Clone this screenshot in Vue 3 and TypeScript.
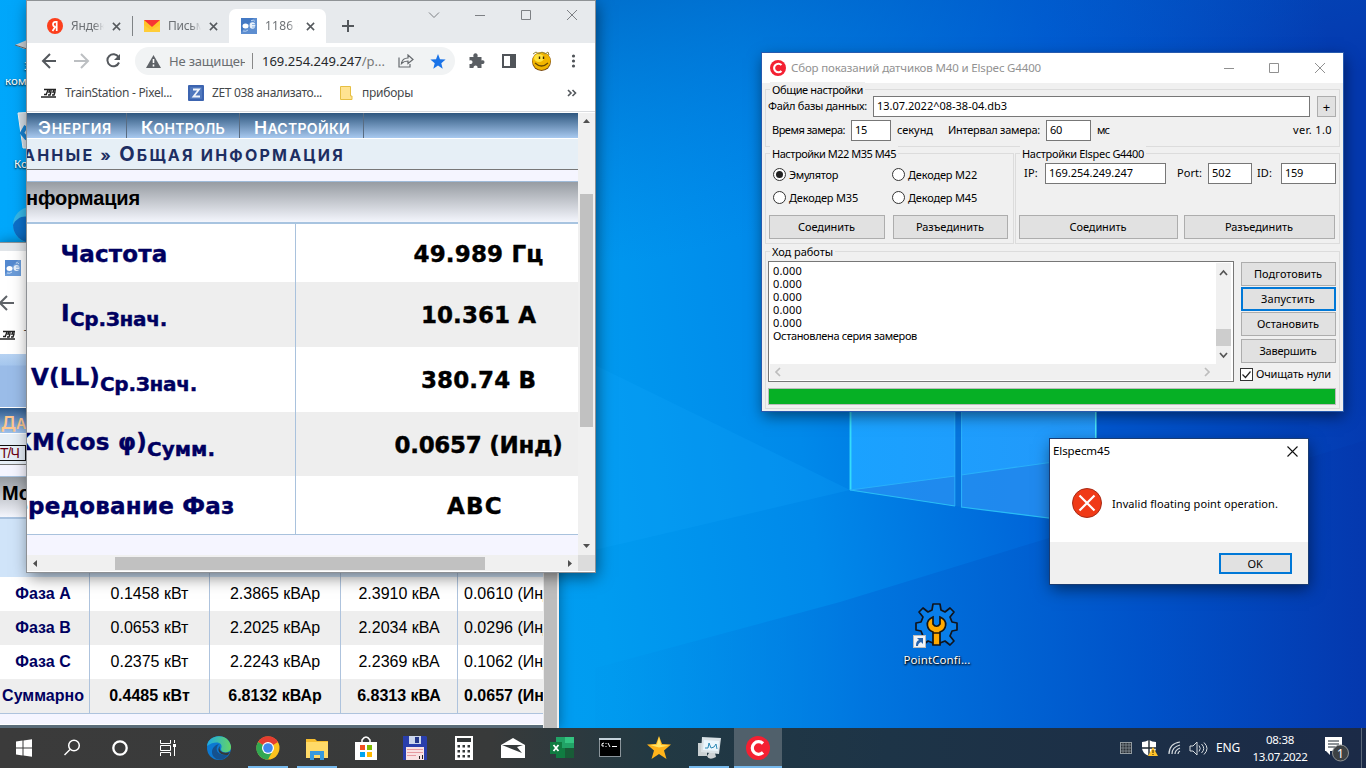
<script setup lang="ts">
import type { Directive } from 'vue'

// Spreads a label over a given width by adjusting its letter spacing.
const vFit: Directive<HTMLElement, number> = {
  mounted(el, binding) {
    const apply = () => {
      el.style.letterSpacing = '0px'
      const natural = el.getBoundingClientRect().width
      const count = (el.textContent ?? '').trim().length
      if (count > 0) el.style.letterSpacing = `${(binding.value - natural) / count}px`
    }
    apply()
    document.fonts.ready.then(apply)
  },
}

interface Reading { id: string; label: string; sub: string; value: string; lw: number; sw: number; vw: number; h: number }
const readings: Reading[] = [
  { id: 'f', label: 'Частота', sub: '', value: '49.989 Гц', lw: 107, sw: 0, vw: 130, h: 58 },
  { id: 'i', label: 'I', sub: 'Ср.Знач.', value: '10.361 A', lw: 9, sw: 97, vw: 115, h: 65 },
  { id: 'v', label: 'V(LL)', sub: 'Ср.Знач.', value: '380.74 В', lw: 69, sw: 97, vw: 115, h: 65 },
  { id: 'k', label: 'КМ(cos φ)', sub: 'Сумм.', value: '0.0657 (Инд)', lw: 134, sw: 68, vw: 168, h: 64 },
  { id: 'p', label: 'Чередование Фаз', sub: '', value: 'ABC', lw: 241, sw: 0, vw: 56, h: 58 },
]
const phases: string[][] = [
  ['Фаза A', '0.1458 кВт', '2.3865 кВАр', '2.3910 кВА', '0.0610 (Инд)'],
  ['Фаза B', '0.0653 кВт', '2.2025 кВАр', '2.2034 кВА', '0.0296 (Инд)'],
  ['Фаза C', '0.2375 кВт', '2.2243 кВАр', '2.2369 кВА', '0.1062 (Инд)'],
  ['Суммарно', '0.4485 кВт', '6.8132 кВАр', '6.8313 кВА', '0.0657 (Инд)'],
]
const log: string[] = ['0.000', '0.000', '0.000', '0.000', '0.000', 'Остановлена серия замеров']
const keys: number[] = [0, 1, 2, 3, 4, 5, 6, 7, 8]
</script>

<template>
  <div class="desktop">
    <svg class="wallpaper" viewBox="0 0 1366 768" preserveAspectRatio="none">
      <defs>
        <linearGradient id="bg" gradientUnits="userSpaceOnUse" x1="0" y1="500" x2="1366" y2="300">
          <stop offset="0" stop-color="#00a8fc" /><stop offset=".42" stop-color="#009cf0" />
          <stop offset=".58" stop-color="#0089ea" /><stop offset=".8" stop-color="#0058d2" /><stop offset="1" stop-color="#0438ae" />
        </linearGradient>
        <linearGradient id="topshade" gradientUnits="userSpaceOnUse" x1="590" y1="0" x2="660" y2="260">
          <stop offset="0" stop-color="#0058b8" stop-opacity=".6" /><stop offset="1" stop-color="#0070d8" stop-opacity="0" />
        </linearGradient>
        <linearGradient id="ray" gradientUnits="userSpaceOnUse" x1="595" y1="0" x2="1366" y2="0">
          <stop offset="0" stop-color="#0090e8" stop-opacity=".1" /><stop offset=".35" stop-color="#0072dd" stop-opacity=".8" />
          <stop offset=".72" stop-color="#0050c6" stop-opacity=".8" /><stop offset="1" stop-color="#0438ae" />
        </linearGradient>
        <linearGradient id="pane" x1="0" y1="0" x2="1" y2="0"><stop offset="0" stop-color="#1aa2ff" /><stop offset="1" stop-color="#2398fa" /></linearGradient>
      </defs>
      <rect width="1366" height="768" fill="url(#bg)" />
      <rect x="560" width="806" height="260" fill="url(#topshade)" />
      <path d="M595 668L840 602 1049 538 1366 440V768H595z" fill="url(#ray)" />
      <path d="M595 365L850 490 595 550z" fill="#16a9ff" opacity=".2" />
      <path d="M850 400H955V506L850 490zM961 400H1096V524L961 507z" fill="url(#pane)" />
      <path d="M850 490L955 476V506zM961 475L1096 456V524L961 507z" fill="#2080e6" opacity=".65" />
      <path d="M850.5 400V490L955 506M961 507L1096 524" fill="none" stroke="#29bdf5" stroke-width="1.2" />
      <path d="M850.5 400V490" stroke="#35dcfa" stroke-width="1.8" /><path d="M1095.8 400V440" stroke="#4deafa" stroke-width="1.5" />
      <path d="M850 490L955 476M961 475L1096 456M955 400V506M961.5 400V507" fill="none" stroke="#29b0fa" stroke-width="1.2" />
      <path d="M955.5 400H961V507L955.5 506z" fill="#0774dc" />
    </svg>

    <div class="desk-item computer">
      <svg width="27" height="16" viewBox="0 0 27 16"><path d="M15 8L27 3V12L24 12z" fill="#c7cdd3" /><path d="M15 8L27 12" stroke="#666" /></svg>
      <span class="r">Эт</span><span>ком</span>
    </div>
    <div class="desk-item bin">
      <svg width="34" height="38" viewBox="0 0 34 38"><path d="M18 2L34 1V37H23z" fill="#d5dee6" stroke="#f1f4f6" /><path d="M26 15l-4 7 5 6" fill="none" stroke="#1682d2" stroke-width="4" /></svg>
      <span>Корзина</span>
    </div>
    <svg class="desk-edge" width="36" height="36" viewBox="0 0 36 36"><circle cx="18" cy="18" r="18" fill="#36b7e7" /><path d="M0 18C3 10 14 6 20 13V36C8 36 0 28 0 18z" fill="#0c6fc9" /></svg>

    <div class="pointconf">
      <svg width="46" height="48" viewBox="0 0 46 48">
        <path d="M20 2h7l1 6 4 2 5-4 4 4-4 5 2 5 5 1v7l-5 1-2 5 4 5-4 4-5-4-5 2v1h-7v-1l-5-2-5 4-4-4 4-5-2-5-5-1v-7l5-1 2-5-4-5 4-4 5 4 4-2z" fill="#087eea" stroke="#10141c" stroke-width="1.7" stroke-linejoin="round" />
        <path d="M20 15c-9 4-6 13 0 15v13h7V30c6-2 9-11 0-15v7c-2 3-5 3-7 0z" fill="#ffa900" stroke="#151515" stroke-width="1.7" /><path d="M20 31h7" stroke="#151515" stroke-width="1.5" />
        <rect x="0.5" y="33.500" width="12" height="12" fill="#f2f4f7" stroke="#bbb" /><path d="M3 44c0-4 1-5 3-6l-2-2h6v6l-2-2c-2 1-3 2-3 4z" fill="#2864ac" />
      </svg>
      <span v-fit="67">PointConfi...</span>
    </div>

    <section class="back-window">
      <div class="b-tabs"></div>
      <div class="b-fav"><svg class="fav" viewBox="0 0 16 16"><rect width="16" height="16" fill="#5489cf" /><path d="M0 14L13 0H16V16H0z" fill="#7ba9df" opacity=".6" /><ellipse cx="4.500" cy="8.500" rx="3" ry="2.500" fill="#fff" /><ellipse cx="11.500" cy="8" rx="3" ry="3" fill="#e8f1fb" /><path d="M11 7h3M11 9.500h3" stroke="#8db3e2" /><path d="M2 13q3 1 5-1M11 3q2-1 3 1" fill="none" stroke="#c5daf3" /></svg></div>
      <div class="b-tool"><svg width="16" height="16" viewBox="0 0 16 16"><path d="M14 8H1M7 1L0 8l7 7" fill="none" stroke="#5f6368" stroke-width="2" /></svg></div>
      <div class="b-book"><svg class="train" width="16" height="10" viewBox="0 0 16 10"><path d="M0 9H15M3 6.500H6M3 1.500H15M7 2L5 7M11 2H9L8 4h2L9 7H7M15 2H13L12 4h2L13 7H11" fill="none" stroke="#222" stroke-width="1.400" /></svg><span>TrainStation</span></div>
      <div class="banner"></div>
      <div class="b-nav"><b class="sc">Данные</b></div>
      <div class="b-crumb"><span>Т/Ч</span></div>
      <div class="gap"></div>
      <div class="b-head">Мощность</div>
      <div class="b-cols"><i v-for="n in 5" :key="n"></i></div>
      <div v-for="(row, r) in phases" :key="r" class="b-row" :class="{ odd: r % 2 === 1, total: r === 3 }">
        <div v-for="(c, i) in row" :key="i" class="cell"><span>{{ c }}</span></div>
      </div>
      <div class="b-end"></div>
      <div class="b-scroll"></div>
    </section>

    <section class="chrome">
      <header class="tabs">
        <div class="tab t1">
          <svg class="fav" viewBox="0 0 16 16"><circle cx="8" cy="8" r="8" fill="#fc3f1d" /><path d="M9.700 13V3.800H8.500Q6 4 6 6.300 6 8.600 8.600 8.800M8.500 8.500L5.500 13" stroke="#fff" stroke-width="1.700" fill="none" /></svg>
          <span class="tt"><b v-fit="40">Яндекс</b></span>
          <svg class="x" viewBox="0 0 10 10"><path d="M1 1l8 8M9 1L1 9" /></svg>
        </div>
        <div class="tab t2">
          <svg class="fav" viewBox="0 0 16 16"><rect y="2" width="16" height="12" fill="#ffcd38" /><path d="M8 9L0 2v5l7 5 9-5V2z" fill="#ffbe1c" opacity=".55" /><path d="M0 2H16L8 9z" fill="#f73434" /></svg>
          <span class="tt"><b v-fit="43">Письма</b></span>
          <svg class="x" viewBox="0 0 10 10"><path d="M1 1l8 8M9 1L1 9" /></svg>
        </div>
        <div class="tab t3">
          <svg class="fav" viewBox="0 0 16 16"><rect width="16" height="16" fill="#4379c4" /><path d="M0 14L13 0H16V16H0z" fill="#709cd8" opacity=".6" /><ellipse cx="4.500" cy="8" rx="3" ry="2.500" fill="#fff" /><ellipse cx="11.500" cy="7.500" rx="2.800" ry="3.200" fill="#e8f1fb" /><path d="M11 6.500h3M11 9h3" stroke="#8db3e2" /><path d="M2 13q3 1 5-1M10 2.500q3-1 4 1" fill="none" stroke="#b5cff0" /></svg>
          <span class="tt"><b v-fit="39">1186 ≠</b></span>
          <svg class="x" viewBox="0 0 10 10"><path d="M1 1l8 8M9 1L1 9" /></svg>
        </div>
        <svg class="plus" viewBox="0 0 12 12"><path d="M6 0V12M0 6H12" stroke="#54585c" stroke-width="2" /></svg>
        <svg class="wincontrols" viewBox="0 0 150 12"><path d="M1 3.500l5 5 5-5M47 6.500h10M93.500 1.500h9v9h-9zM139 1l10 10M149 1l-10 10" fill="none" stroke="#7d8084" /></svg>
      </header>
      <div class="toolbar">
        <svg class="navicons" viewBox="0 0 84 16"><g fill="none" stroke-width="2"><path d="M15 8H2M9 1L2 8l7 7" stroke="#54585d" /><path d="M33 8h13M40 1l7 7-7 7" stroke="#bcbfc2" /><path d="M77.500 4A6 6 0 1 0 78 9.500" stroke="#54585d" /></g><path d="M79 1v6h-6z" fill="#54585d" /></svg>
        <div class="omni">
          <svg width="15" height="13" viewBox="0 0 15 13"><path d="M7.500 0L15 13H0z" fill="#5f6368" /><path d="M7.500 4v4M7.500 9.500v2" stroke="#fff" stroke-width="1.600" /></svg>
          <span class="unsafe"><b v-fit="86">Не защищено</b></span><i></i>
          <span class="url" v-fit="123">169.254.249.247<em>/p...</em></span>
          <svg class="share" width="16" height="14" viewBox="0 0 16 14"><path d="M1 3.500V13h11v-3M3.500 9.500C4 6 6 4 10 4V1l5 4.500-5 4V7C7 7 5 8 3.500 9.500z" fill="none" stroke="#666a6e" stroke-width="1.200" /></svg>
          <svg width="16" height="15" viewBox="0 0 16 15"><path d="M8 0l2 5.200 5.600.300-4.300 3.700 1.400 5.500L8 11.600l-4.700 3.100 1.400-5.500L.4 5.500 6 5.200z" fill="#1a73e8" /></svg>
        </div>
        <svg class="tools" viewBox="0 0 108 22">
          <path d="M0.500 7h4c-1.500-5 5.500-5 4 0h4v3.500c4-1.500 4 4.500 0 3.500v4H8.500c1-3.500-4.500-3.500-4 0h-4v-4c4 1 4-5 0-3.500z" fill="#5a5e63" />
          <rect x="34" y="5" width="12" height="12" fill="none" stroke="#505459" stroke-width="2" /><rect x="41" y="5" width="5" height="12" fill="#505459" />
          <circle cx="72.500" cy="11.500" r="9.500" fill="#7c4b0f" /><circle cx="72.500" cy="11" r="9" fill="#f1b500" /><ellipse cx="70" cy="8" rx="5" ry="4" fill="#ffe23d" /><path d="M64 4l3-2 3 2 3-2 3 2 3-2 1 3" fill="none" stroke="#8f843a" /><path d="M70.500 6.500v2.500M74.500 6.500v2.500" stroke="#372400" stroke-width="1.400" /><path d="M66 13q6.500 6 13 0" fill="none" stroke="#6b4a00" stroke-width="1.200" />
          <g fill="#505459"><circle cx="104.500" cy="6" r="1.600" /><circle cx="104.500" cy="11" r="1.600" /><circle cx="104.500" cy="16" r="1.600" /></g>
        </svg>
      </div>
      <div class="bookmarks">
        <svg class="train" width="16" height="10" viewBox="0 0 16 10"><path d="M0 9H15M3 6.500H6M3 1.500H15M7 2L5 7M11 2H9L8 4h2L9 7H7M15 2H13L12 4h2L13 7H11" fill="none" stroke="#222" stroke-width="1.400" /></svg>
        <span v-fit="107">TrainStation - Pixel...</span>
        <svg class="zet" width="16" height="16" viewBox="0 0 16 16"><rect width="16" height="16" rx="1" fill="#3c64b0" /><rect x="2" y="2" width="12" height="12" rx="1" fill="#5078bd" /><path d="M5 4.500h6L5.500 11.500H12" fill="none" stroke="#f1f5fb" stroke-width="1.800" /></svg>
        <span v-fit="110">ZET 038 анализато...</span>
        <svg class="folder" width="13" height="14" viewBox="0 0 13 14"><path d="M.5.5h10V10h1.500v3.500H.5z" fill="#ffe391" stroke="#e6bf42" /></svg>
        <span v-fit="51">приборы</span>
        <svg class="more" width="10" height="8" viewBox="0 0 10 8"><path d="M1 1l3 3-3 3M5.500 1l3 3-3 3" fill="none" stroke="#54585d" stroke-width="1.600" /></svg>
      </div>
      <div class="view">
        <div class="page">
          <nav><span class="n1"><b class="sc" v-fit="74">Энергия</b></span><span class="n2"><b class="sc" v-fit="84">Контроль</b></span><span class="n3"><b class="sc" v-fit="96">Настройки</b></span></nav>
          <div class="crumb"><span class="trail" v-fit="322">анные » <b class="sc">Общая</b> информация</span></div>
          <div class="gap"></div>
          <div class="head"><span v-fit="114">нформация</span></div>
          <div v-for="r in readings" :key="r.id" class="reading" :class="r.id" :style="{ height: r.h + 'px' }">
            <div class="lab" :class="{ withsub: r.sub }"><span v-fit="r.lw">{{ r.label }}</span><small v-if="r.sub" v-fit="r.sw">{{ r.sub }}</small></div>
            <div class="val"><span v-fit="r.vw">{{ r.value }}</span></div>
          </div>
          <div class="foot"></div>
        </div>
        <div class="vscroll"><svg viewBox="0 0 17 442"><rect x="2" y="81" width="13" height="233" fill="#c1c1c1" /><path d="M5 10l3.500-4 3.500 4zM5 431l3.500 4 3.500-4z" fill="#505050" /></svg></div>
        <div class="hscroll"><svg viewBox="0 0 551 16"><rect x="88" y="2" width="370" height="13" fill="#c1c1c1" /><path d="M10 5v7L6 8.500zM541 5v7l4-3.500z" fill="#505050" /></svg></div>
        <div class="corner"></div>
      </div>
    </section>

    <section class="form">
      <header>
        <svg width="16" height="16" viewBox="0 0 16 16"><circle cx="8" cy="8" r="8" fill="#f42032" /><path d="M11.500 5A4.300 4.300 0 1 0 11.500 11" fill="none" stroke="#fff" stroke-width="2.100" /></svg>
        <span v-fit="250">Сбор показаний датчиков М40 и Elspec G4400</span>
        <svg class="fc" width="102" height="12" viewBox="0 0 102 12"><path d="M0 6.500h10M45.500 1.500h9v9h-9zM91 1l10 10M101 1L91 11" fill="none" stroke="#909090" /></svg>
      </header>
      <div class="group g1">
        <h4><span v-fit="91">Общие настройки</span></h4>
        <div class="line l1"><label v-fit="99">Файл базы данных:</label><div class="input"><span v-fit="130">13.07.2022^08-38-04.db3</span></div><button>+</button></div>
        <div class="line l2"><label v-fit="73">Время замера:</label><div class="input w40"><span v-fit="12">15</span></div><label class="sec" v-fit="36">секунд</label><label class="int" v-fit="92">Интервал замера:</label><div class="input w45"><span v-fit="12">60</span></div><label class="ms" v-fit="12">мс</label><label class="ver" v-fit="39">ver. 1.0</label></div>
      </div>
      <div class="pair">
        <div class="group g2">
          <h4><span v-fit="124">Настройки М22 М35 М45</span></h4>
          <div class="radios">
            <div class="radio"><i class="on"></i><span v-fit="49">Эмулятор</span></div><div class="radio"><i></i><span v-fit="69">Декодер М22</span></div>
            <div class="radio"><i></i><span v-fit="69">Декодер М35</span></div><div class="radio"><i></i><span v-fit="69">Декодер М45</span></div>
          </div>
          <div class="btns"><button class="b116"><span v-fit="57">Соединить</span></button><button class="b115"><span v-fit="68">Разъединить</span></button></div>
        </div>
        <div class="group g3">
          <h4><span v-fit="122">Настройки Elspec G4400</span></h4>
          <div class="line net"><label class="ip" v-fit="14">IP:</label><div class="input w121"><span v-fit="84">169.254.249.247</span></div><label class="port" v-fit="25">Port:</label><div class="input w44"><span v-fit="19">502</span></div><label class="id" v-fit="15">ID:</label><div class="input w55"><span v-fit="18">159</span></div></div>
          <div class="btns"><button class="b159"><span v-fit="57">Соединить</span></button><button class="b151"><span v-fit="68">Разъединить</span></button></div>
        </div>
      </div>
      <div class="group g4">
        <h4><span v-fit="61">Ход работы</span></h4>
        <div class="work">
          <div class="memo">
            <div class="lines"><p v-for="(t, i) in log" :key="i"><span v-fit="i === 5 ? 144 : 29">{{ t }}</span></p></div>
            <svg class="mv" viewBox="0 0 15 101"><rect width="15" height="101" fill="#f0f0f0" /><rect y="66" width="15" height="17" fill="#cdcdcd" /><path d="M4 12l3.500-4 3.500 4M4 90l3.500 4 3.500-4" fill="none" stroke="#555" stroke-width="1.700" /></svg>
            <svg class="mh" viewBox="0 0 461 16"><rect width="461" height="16" fill="#f0f0f0" /><path d="M10 4L6 8l4 4M435 4l4 4-4 4" fill="none" stroke="#bdbdbd" stroke-width="1.700" /></svg>
          </div>
          <div class="side">
            <button><span v-fit="68">Подготовить</span></button><button class="focus"><span v-fit="54">Запустить</span></button><button><span v-fit="62">Остановить</span></button><button class="last"><span v-fit="57">Завершить</span></button>
            <div class="check"><svg width="13" height="13" viewBox="0 0 13 13"><rect x=".5" y=".5" width="12" height="12" fill="#fff" stroke="#333" /><path d="M2.500 6.500l3 3 5-6" fill="none" stroke="#222" stroke-width="1.200" /></svg><span v-fit="75">Очищать нули</span></div>
          </div>
        </div>
        <div class="progress"></div>
      </div>
    </section>

    <section class="dialog">
      <header><span v-fit="57">Elspecm45</span><svg width="11" height="11" viewBox="0 0 11 11"><path d="M.5.5l10 10M10.500.5l-10 10" stroke="#111" stroke-width="1.100" /></svg></header>
      <div class="msg"><svg width="30" height="30" viewBox="0 0 30 30"><circle cx="15" cy="15" r="14.500" fill="#f03a17" stroke="#a72c17" /><path d="M7.500 7.500l15 15M22.500 7.500l-15 15" stroke="#fff" stroke-width="2.200" /></svg><span v-fit="166">Invalid floating point operation.</span></div>
      <footer><button><span v-fit="15">OK</span></button></footer>
    </section>

    <footer class="taskbar">
      <div class="task"><svg viewBox="0 0 40 40"><path d="M16 13.500l6.500-.9v6.900H16zM23.500 12.400l8.500-1.100v8.200h-8.500zM16 20.500h6.500v6.900L16 26.500zM23.500 20.500H32v8.200l-8.500-1.100z" fill="#fff" stroke="none" transform="translate(-4)" /></svg></div>
      <div class="task"><svg viewBox="0 0 40 40"><circle cx="22" cy="17.500" r="5.300" /><path d="M18 21.500L12.500 27" /></svg></div>
      <div class="task"><svg viewBox="0 0 40 40"><circle cx="20" cy="20" r="6.700" stroke-width="2.300" /></svg></div>
      <div class="task"><svg viewBox="0 0 40 40"><g stroke-width="1"><path d="M12.500 12v3.500h10V12M12.500 28v-3.500h10V28M12.500 17.500h10v5h-10zM26.500 12v3M26.500 19v9" /></g><rect x="25" y="16" width="3" height="3" fill="#fff" stroke="none" /></svg></div>
      <div class="task wide edge"><svg viewBox="0 0 40 40"><defs><linearGradient id="eg"><stop stop-color="#1ca9e5" /><stop offset="1" stop-color="#64d466" /></linearGradient></defs><circle cx="20" cy="20" r="12" fill="#0c79d2" stroke="none" /><path d="M8 18C9 6 29 4 32 18c1 8-10 8-10 3 3-7-6-9-14-3z" fill="url(#eg)" stroke="none" /><path d="M20 16c-5 5-2 12 9 11-5 8-16 5-16-3 0-4 3-7 7-8z" fill="#15518e" stroke="none" /><path d="M21 18c-2 5 3 8 10 6l-2 3c-8 1-12-5-8-9z" fill="#353839" stroke="none" /></svg></div>
      <div class="task wide run chr"><svg viewBox="0 0 40 40"><g stroke="none"><circle cx="20" cy="20" r="11.500" fill="#fbc21d" /><path d="M20 20L10 14A11.500 11.500 0 0 1 30 14z" fill="#e53d30" /><path d="M20 20L10 14A11.500 11.500 0 0 0 20 31.500l5-9z" fill="#31a852" /><circle cx="20" cy="20" r="6" fill="#fff" /><circle cx="20" cy="20" r="4.800" fill="#4087ed" /></g></svg></div>
      <div class="task wide run"><svg viewBox="0 0 40 40"><g stroke="none"><path d="M9 11h9l2 2h11v17H9z" fill="#f6bd2e" /><rect x="9" y="14" width="22" height="16" fill="#ffda68" /><path d="M13 23h14v9h-4v-5h-6v5h-4z" fill="#3699dd" /></g></svg></div>
      <div class="task wide"><svg viewBox="0 0 40 40"><path d="M16 14v-2q4-6 8 0v2" /><rect x="9" y="14" width="22" height="18" fill="#fff" stroke="none" /><g stroke="none"><path d="M14 17h5v5h-5z" fill="#f25022" /><path d="M21 17h5v5h-5z" fill="#7fba00" /><path d="M14 24h5v5h-5z" fill="#00a4ef" /><path d="M21 24h5v5h-5z" fill="#ffb900" /></g></svg></div>
      <div class="task wide"><svg viewBox="0 0 40 40"><g stroke="none"><path d="M8 8h23l1 1v23H8z" fill="#293eac" /><rect x="14" y="8" width="12" height="8" fill="#cbd6ec" /><rect x="20" y="9" width="4" height="6" fill="#243889" /><rect x="11" y="19" width="18" height="13" fill="#f8e2e3" /><path d="M12 21h16v1H12zM12 24h16v1H12zM12 27h9v1h-9z" fill="#e59aa0" /><path d="M24 28h1v3h-1zM27 27h1v4h-1z" fill="#222" /></g></svg></div>
      <div class="task wide"><svg viewBox="0 0 40 40"><rect x="11" y="8" width="18" height="24" fill="#fff" stroke="none" /><rect x="13" y="10" width="14" height="4" fill="#333738" stroke="none" /><g fill="#34393a" stroke="none"><rect v-for="k in keys" :key="k" :x="13.500 + (k % 3) * 5" :y="17 + Math.floor(k / 3) * 5" width="2.500" height="2.500" /></g></svg></div>
      <div class="task wide"><svg viewBox="0 0 40 40"><path d="M8 17l12-7 12 7v13H8z" fill="#fff" stroke="none" /><path d="M9 17l20 8-5-6 6-2z" fill="#353a3b" stroke="none" /></svg></div>
      <div class="task wide"><svg viewBox="0 0 40 40"><g stroke="none"><rect x="14" y="9" width="18" height="21" fill="#21a366" /><path d="M23 9h9v6h-9z" fill="#34c481" /><path d="M14 20h18v10H14z" fill="#107c41" /><path d="M23 20h9v10h-9z" fill="#185c37" /><rect x="8" y="14" width="12" height="12" fill="#107c41" /></g><path d="M11.500 17l5 6M16.500 17l-5 6" stroke-width="1.800" /></svg></div>
      <div class="task wide"><svg viewBox="0 0 40 40"><rect x="8.500" y="10.500" width="21" height="18" fill="#000" stroke="#8b959b" stroke-width="1" /><rect x="8" y="10" width="22" height="2" fill="#c5d2da" stroke="none" /><path d="M13 15q-3 0-2 3h2M15 15v1M15 18v1M17 15l2 4M21 18.500h5" stroke-width="1" /></svg></div>
      <div class="task wide"><svg viewBox="0 0 40 40"><path d="M19 8l3 8 9 .5-7 6 2.500 8.500L19 26l-7.500 5 2.500-8.500-7-6 9-.5z" fill="#ffb31a" stroke="none" /><path d="M19 9l2 8 8 .5-10 2-9-2.500 7-.5z" fill="#ffe568" stroke="none" /></svg></div>
      <div class="task wide run mon"><svg viewBox="0 0 40 40"><g stroke="none"><rect x="9" y="15" width="9" height="13" fill="#c9d0d2" /><path d="M13 9l19 1-2 16-18-2z" fill="#dae2e6" /><path d="M15 12l15 1-1 10-15-1z" fill="#eaf6fc" /><path d="M20 25h6l1 4q-7 4-9-1z" fill="#cdd2d4" /></g><path d="M16 20h3l1-5 2 5 3-1 2-3 1 5" stroke="#2b88b5" stroke-width="1" /></svg></div>
      <div class="task active"><svg viewBox="0 0 40 40"><circle cx="20" cy="20" r="12" fill="#f42032" stroke="none" /><path d="M25 15.500A6.300 6.300 0 1 0 25 24.500" stroke-width="3.200" /></svg></div>
      <div class="tray">
        <svg class="trayicons" viewBox="0 0 90 24"><rect x="1.500" y="6.500" width="11" height="11" fill="#292f35" stroke="#929ba1" /><path d="M4 6v12M7 6v12M10 6v12M1 9h12M1 12h12M1 15h12" stroke="#9098a0" stroke-width=".7" />
          <path d="M30 4q-4 2-7 2v6q0 5 7 8 7-3 7-8V6q-4 0-7-2z" fill="#fff" /><path d="M30 4v16M23 12h14" stroke="#1d2730" stroke-width="1.400" /><path d="M34 11l5 9H29z" fill="#ffc22a" /><path d="M34 14v3M34 18v1" stroke="#332300" />
          <g fill="none" stroke="#d7dce0" stroke-width="1.200"><path d="M50 18C50 11 54 7 61 6M53 18q0-7 8-9M56 18q0-4 5-6M59 18q0-2 2-3" /><path d="M71 10h3l4-4v13l-4-4h-3zM80 9.500q2.500 3 0 6M82.500 8q4.500 4.500 0 9M85 6.500q6 6 0 12" stroke-width="1" /></g></svg>
        <span class="eng" v-fit="24">ENG</span>
        <div class="clock"><span v-fit="28">08:38</span><span v-fit="55">13.07.2022</span></div>
        <svg class="notif" viewBox="0 0 26 26"><path d="M1 1h17v14H6v4l-4-4H1z" fill="#fff" /><path d="M4 5h11M4 8h11M4 11h7" stroke="#1a2730" /><circle cx="16.500" cy="17" r="8" fill="#3d4144" stroke="#8f9394" /><text x="16.500" y="21.500" text-anchor="middle" fill="#fff" font-size="12">1</text></svg>
        <i class="show"></i>
      </div>
    </footer>
  </div>
</template>

<style scoped>
* { box-sizing: border-box; }
.desktop { position: relative; width: 1366px; height: 768px; overflow: hidden; background: #0078d8; font: 12px/16px "Noto Sans", "Open Sans", sans-serif; color: #000; white-space: nowrap; }
svg { display: block; flex: none; }
b, em { font-weight: inherit; font-style: normal; }
span, b, label, small { display: inline-block; flex: none; }
.wallpaper { position: absolute; width: 1366px; height: 768px; }
.desk-item { position: absolute; left: 0; display: flex; flex-direction: column; color: #fff; font-size: 11.500px; line-height: 15px; text-shadow: 0 1px 2px #000; }
.computer { top: 37px; }
.computer span { padding-left: 5px; }
.computer span.r { padding-left: 24px; margin-top: 5px; }
.bin { top: 111px; }
.bin span { padding-left: 14px; margin-top: 7px; }
.desk-edge { position: absolute; left: 13px; top: 207px; }
.pointconf { position: absolute; left: 903px; top: 602px; width: 68px; display: flex; flex-direction: column; align-items: center; color: #fff; font-size: 11.500px; text-shadow: 1px 1px 2px #000, 0 1px 2px #000; }
.pointconf svg { margin-left: -2px; margin-bottom: 2px; align-self: center; }
.fav { width: 16px; height: 16px; }

/* Capitals at two sizes: the first letter tall, the rest reduced. */
.sc { text-transform: uppercase; font-size: .78em; }
.sc::first-letter { font-size: 1.25em; }

.back-window { position: absolute; left: 0; top: 242px; width: 559px; height: 486px; background: #fff; border-top: 1px solid #8c9195; box-shadow: 0 0 12px rgba(0,0,0,.4); overflow: hidden; font-family: "Liberation Sans", Arial, sans-serif; }
.b-tabs { height: 8px; background: #e1e5e9; }
.b-fav { padding: 9px 0 0 5px; height: 44px; }
.b-tool { height: 32px; }
.b-book { height: 27px; display: flex; gap: 8px; font: 12px/16px "Noto Sans", sans-serif; color: #444; }
.b-book svg { margin-top: 3px; }
.banner { height: 53px; background: linear-gradient(#b6d2f2 0, #a6c7ee 11px, #9abce8 12px); }
.b-nav { height: 27px; border: solid #fff; border-width: 1px 0; background: linear-gradient(#2e5a8c, #9fc2ec); color: #ffc78e; font: 600 18px/30px Inter, "Liberation Sans", sans-serif; padding-left: 1px; overflow: hidden; }
.b-crumb { height: 31px; background: #e7eff7; border-bottom: 1px solid #777; padding-top: 11px; }
.b-crumb span { width: 26px; height: 16px; border: 1.500px solid #111; border-left: 0; color: #6a0012; font-size: 14px; line-height: 14px; letter-spacing: -1px; }
.gap { height: 11px; background: #f5f5ff; }
.b-head { height: 43px; border-top: 1px solid #a8c2df; border-bottom: 2px solid #a8c2df; background: linear-gradient(#969ba1, #f4f6fd); font-weight: 700; font-size: 20px; line-height: 33px; padding-left: 2px; }
.b-cols, .b-row { display: grid; grid-template-columns: 90px 120px 131px 117px 140px; width: 543px; overflow: hidden; }
.b-cols { height: 58px; background: #d0e4f9; }
.b-cols i, .cell { border-right: 1px solid #aec3dd; }
.b-row { height: 34px; font-size: 16px; line-height: 33px; text-align: center; background: #fff; }
.b-row.odd { background: #eee; }
.cell:first-child { color: #000060; font-weight: 700; padding-right: 3px; }
.cell:last-child { text-align: left; padding-left: 6px; }
.b-row.total { font-weight: 700; border-bottom: 1px solid #aec3dd; height: 35px; }
.b-end { height: 15px; width: 543px; background: linear-gradient(#f5f5ff 0 10px, #fff 10px 11px, #5a6c79 11px); }
.b-scroll { position: absolute; right: 0; top: 9px; width: 16px; height: 480px; background: linear-gradient(90deg, #eee 1px, #bdbdbd 1px 14px, #eee 14px); }

.chrome { position: absolute; left: 27px; top: 0; width: 568px; height: 572px; background: #fff; outline: 1px solid #8d9094; box-shadow: 2px 5px 15px rgba(0,0,0,.5); color: #45484b; }
.tabs { height: 43px; border-top: 1px solid #8f9396; background: #e7eaed; display: flex; align-items: flex-start; padding-top: 8px; position: relative; }
.tab { height: 34px; display: flex; align-items: center; color: #6d7175; font-size: 12px; }
.t1 { width: 106px; padding-left: 20px; border-right: 1px solid #7f8386; height: 20px; margin-top: 7px; }
.t2 { width: 96px; padding-left: 11px; }
.t3 { width: 97px; padding-left: 12px; background: #fff; border-radius: 7px 7px 0 0; }
.tt { width: 33px; margin-left: 8px; overflow: hidden; -webkit-mask-image: linear-gradient(90deg, #000 70%, transparent); mask-image: linear-gradient(90deg, #000 70%, transparent); }
.x { width: 9px; height: 9px; margin-left: 8px; }
.x path { stroke: #55595d; stroke-width: 1.700; }
.plus { width: 12px; height: 12px; margin: 11px 0 0 16px; }
.wincontrols { width: 150px; height: 12px; position: absolute; left: 401px; top: 8px; }
.toolbar { height: 36px; display: flex; align-items: center; }
.navicons { width: 84px; height: 16px; margin-left: 14px; }
.omni { width: 320px; height: 28px; margin-left: 10px; background: #f1f3f4; border-radius: 14px; display: flex; align-items: center; padding-left: 11px; font-size: 13px; }
.unsafe { width: 76px; margin-left: 8px; overflow: hidden; color: #696d71; }
.omni i { width: 1px; height: 16px; background: #888; margin: 0 9px 0 7px; }
.url { color: #25282b; }
.url em { color: #777; }
.share { margin: 0 16px 0 13px; }
.tools { width: 108px; height: 22px; margin-left: 14px; }
.bookmarks { height: 33px; display: flex; align-items: center; padding: 0 0 4px 14px; border-bottom: 1px solid #dadcdf; font-size: 12px; }
.bookmarks .train { margin-right: 8px; }
.zet { margin: 0 8px 0 16px; }
.folder { margin: 0 9px 0 18px; }
.more { margin-left: auto; margin-right: 18px; }
.view { display: grid; grid-template-columns: 551px 17px; grid-template-rows: 442px 16px; padding-top: 1px; font-family: "Liberation Sans", Arial, sans-serif; }
.page { overflow: hidden; background: #f5f5ff; }
nav { height: 25px; background: linear-gradient(#2f577f, #a8c9ef); display: flex; color: #fff; font: 600 18px/30px Inter, "Liberation Sans", sans-serif; }
nav > span { border-right: 1px solid #596c82; padding-left: 11px; height: 25px; }
.n1 { width: 100px; } .n2 { width: 113px; padding-left: 14px; } .n3 { width: 124px; padding-left: 14px; }
.crumb { height: 32px; border-top: 1px solid #fff; border-bottom: 1px solid #777; background: #e6eff6; color: #1d2e62; font: 700 16px/32px Inter, "Liberation Sans", sans-serif; }
.crumb .trail { margin-left: -4px; text-transform: uppercase; }
.crumb .sc { font-size: 1em; line-height: 20px; }
.head { height: 43px; border-top: 1px solid #9fbbd9; border-bottom: 2px solid #a8c4e0; background: linear-gradient(#979ca2, #f4f6fd); color: #000; font-weight: 700; font-size: 20px; line-height: 33px; }
.page > .head span { margin-left: -1px; }
.reading { display: flex; background: #fff; font: 700 23px/28px "DejaVu Sans", sans-serif; -webkit-text-stroke: .4px currentColor; }
.reading:nth-child(even) { background: #eee; }
.lab { width: 363px; margin-left: -94px; flex: none; display: flex; align-items: center; justify-content: center; color: #000060; border-right: 1px solid #a9c2dd; padding-top: 1px; }
.lab.withsub { align-items: baseline; padding-top: 16px; }
.lab small { font-size: 20px; transform: translateY(6px); }
.i .lab { padding-top: 17px; }
.i .lab small { transform: translateY(5px); }
.val { width: 366px; flex: none; display: flex; align-items: center; justify-content: center; color: #000; padding: 1px 1px 0 0; }
.p .val { padding-right: 8px; }
.foot { height: 21px; border-top: 1px solid #a9c2dd; }
.vscroll, .hscroll { background: #f0f0f0; }
.corner { background: #dcdcdc; }

.form { position: absolute; left: 762px; top: 53px; width: 581px; height: 358px; background: #f0f0f0; outline: 1px solid #275aae; box-shadow: 1px 5px 14px rgba(0,0,0,.5); font-size: 11px; line-height: 14px; }
.form header { height: 30px; background: #fff; display: flex; align-items: center; padding-left: 8px; color: #929292; font-size: 11.500px; }
.form header span { margin-left: 5px; }
.fc { margin-left: auto; margin-right: 17px; }
.group { border: 1px solid #dcdcdc; margin-left: 3px; }
h4 { margin: -8px 0 0 4px; padding: 0 2px; height: 14px; width: max-content; font-weight: 400; background: #f0f0f0; line-height: 16px; }
.g1 { width: 575px; height: 58px; margin-top: 6px; }
.line { display: flex; align-items: center; height: 21px; }
.line label { transform: translateY(-1px); }
.input { height: 21px; border: 1px solid #777; background: #fff; padding: 2px 0 0 3px; flex: none; }
button { appearance: none; border: 1px solid #adadad; background: #e1e1e1; color: #000; font: inherit; padding: 0; height: 24px; flex: none; display: flex; align-items: center; justify-content: center; }
button span { margin-left: -1px; }
.l1 { padding-left: 2px; }
.l1 .input { width: 437px; margin-left: 6px; }
.l1 button { width: 19px; height: 21px; margin-left: 7px; font-size: 13px; }
.l2 { padding-left: 6px; margin-top: 3px; }
.w40 { width: 40px; margin-left: 6px; }
.sec { margin-left: 6px; }
.int { margin-left: 15px; }
.w45 { width: 45px; margin-left: 6px; }
.ms { margin-left: 6px; }
.ver { margin-left: auto; margin-right: 7px; }
.pair { display: flex; margin-top: 6px; }
.g2 { width: 249px; height: 91px; }
.g3 { width: 325px; height: 91px; margin-left: 1px; }
.radios { display: grid; grid-template-columns: 119px 120px; grid-template-rows: 23px 23px; padding: 3px 0 0 7px; }
.radio { display: flex; align-items: center; gap: 3px; }
.radio i { width: 13px; height: 13px; border: 1px solid #333; border-radius: 50%; background: #fff; display: flex; align-items: center; justify-content: center; }
.radio .on::after { content: ""; width: 7px; height: 7px; border-radius: 50%; background: #222; }
.g2 .btns { display: flex; gap: 8px; padding: 6px 0 0 3px; }
.b116 { width: 116px; } .b115 { width: 115px; }
.net { padding: 0 0 0 8px; margin-top: 3px; }
.w121 { width: 121px; margin-left: 7px; }
.port { margin-left: 11px; } .w44 { width: 44px; margin-left: 6px; }
.id { margin-left: 5px; } .w55 { width: 55px; margin-left: 9px; }
.g3 .btns { display: flex; gap: 6px; padding: 31px 0 0 3px; }
.b159 { width: 159px; } .b151 { width: 151px; }
.g4 { width: 575px; height: 158px; margin-top: 7px; }
.work { display: flex; margin: 3px 0 0 2px; }
.memo { width: 466px; height: 121px; border: 1px solid #777; background: #fff; padding: 1px; display: grid; grid-template-columns: 446px 16px; grid-template-rows: 101px 16px; }
.lines { padding: 1px 0 0 3px; }
p { margin: 0; height: 13px; line-height: 14px; }
.mv { width: 15px; height: 101px; }
.mh { grid-column: 1 / 3; width: 461px; height: 16px; }
.side { margin: 1px 0 0 7px; display: flex; flex-direction: column; gap: 1px; }
.side button { width: 95px; }
.side .focus { border: 2px solid #0078d7; }
.side .last { margin-top: 2px; }
.check { display: flex; align-items: center; gap: 3px; margin: 3px 0 0 -1px; height: 14px; }
.progress { width: 568px; height: 17px; margin: 6px 0 0 2px; border: 1px solid #bcbcbc; background: #06b025; }

.dialog { position: absolute; left: 1050px; top: 439px; width: 258px; height: 145px; background: #fff; outline: 1px solid #1a3c72; box-shadow: 1px 5px 15px rgba(0,0,0,.5); font-size: 11.500px; display: flex; flex-direction: column; }
.dialog header { height: 24px; display: flex; align-items: center; justify-content: space-between; padding: 0 10px 0 3px; }
.msg { display: flex; align-items: center; gap: 10px; padding: 0 0 0 22px; height: 79px; font-size: 11px; }
.msg span { padding-top: 2px; }
.dialog footer { flex: 1; background: #f0f0f0; padding: 11px 0 0 169px; }
.dialog footer button { width: 73px; height: 21px; border: 2px solid #0078d7; font-size: 11px; }

.taskbar { position: absolute; left: 0; top: 728px; width: 1366px; height: 40px; display: flex; background: linear-gradient(90deg, #3b3b3b 0, #383a3a 36%, #223943 48%, #1d3447 65%, #1b2a47 100%); color: #fff; }
.task { width: 48px; height: 40px; display: flex; justify-content: center; }
.task.wide { width: 49px; }
.edge { margin-left: 2px; }
.task svg { width: 40px; height: 40px; fill: none; stroke: #fff; stroke-width: 1.500; }
.run { background: linear-gradient(#76b9ed, #76b9ed) center bottom / 40px 2px no-repeat; }
.active { background: #50606b; border-bottom: 2px solid #76b9ed; margin-left: 1px; }
.tray { flex: 1; display: flex; align-items: center; justify-content: flex-end; font-size: 12px; }
.trayicons { width: 90px; height: 24px; margin-right: 7px; }
.eng { margin-right: 12px; }
.clock { display: flex; flex-direction: column; align-items: center; line-height: 17px; font-size: 11.500px; width: 56px; margin-right: 16px; padding-bottom: 1px; }
.notif { width: 26px; height: 26px; margin-top: 2px; }
.show { width: 1px; height: 40px; background: #5b6879; margin: 0 4px 0 11px; }
</style>

<style>
body { margin: 0; overflow: hidden; }
</style>
